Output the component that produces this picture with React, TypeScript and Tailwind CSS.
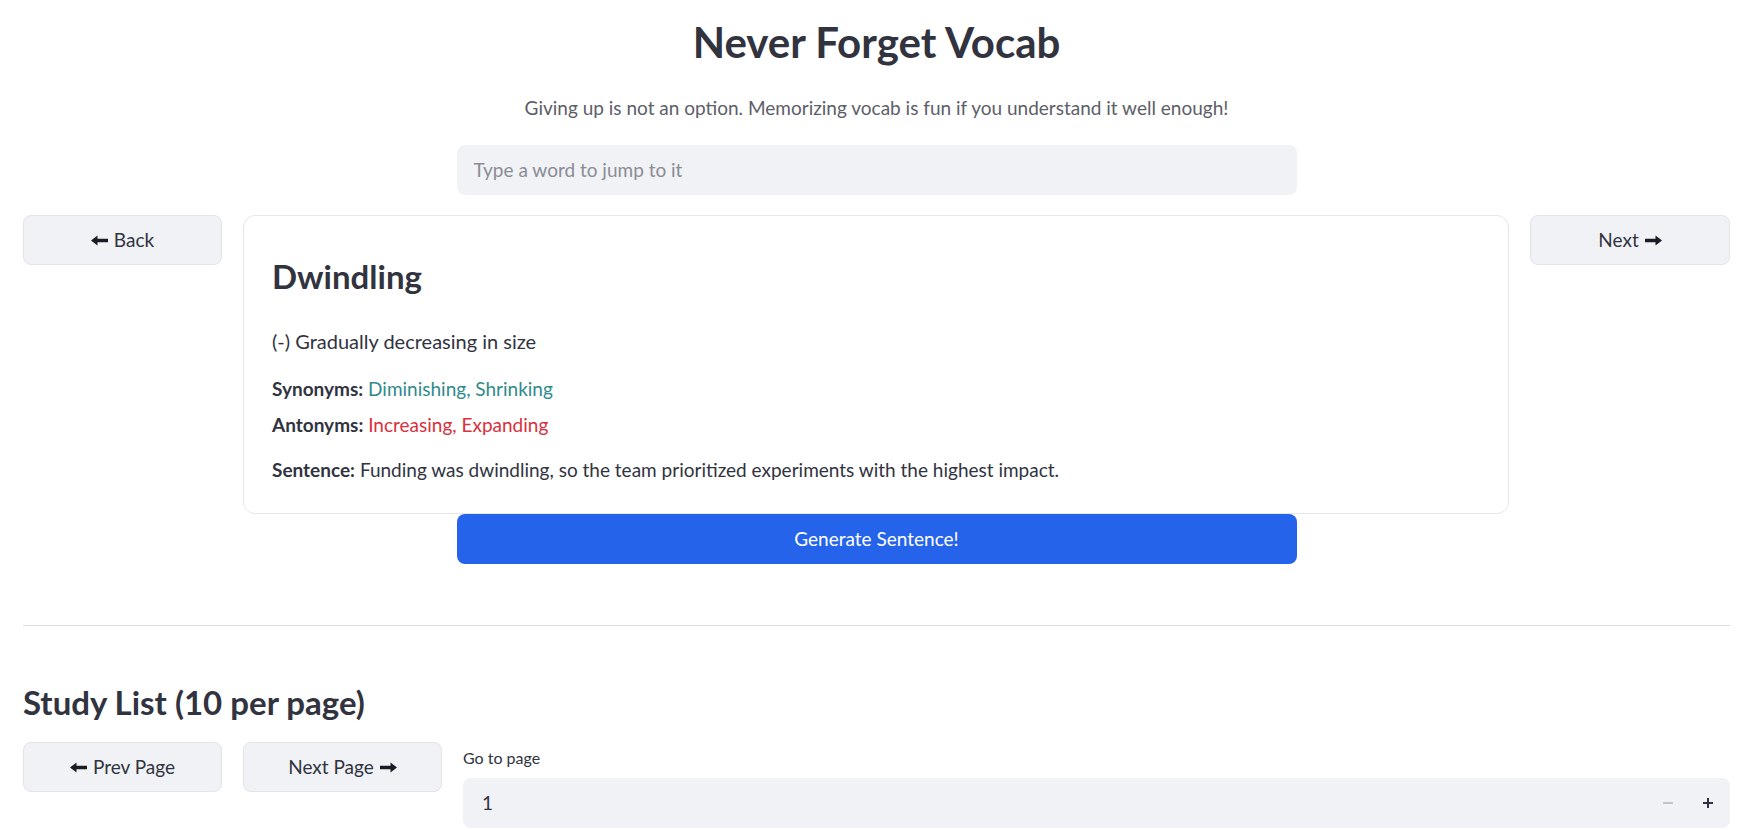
import React from "react";

const font = { fontFamily: "Lato, 'Noto Sans', sans-serif" };

const LeftArrow = () => (
    <svg width="17" height="11" viewBox="0 0 17 11" className="inline-block">
        <path d="M0 5.5 L6.5 0.5 L6.5 3.8 L17 3.8 L17 7.2 L6.5 7.2 L6.5 10.5 Z" fill="#1b1d26" />
    </svg>
);

const RightArrow = () => (
    <svg width="17" height="11" viewBox="0 0 17 11" className="inline-block">
        <path d="M17 5.5 L10.5 0.5 L10.5 3.8 L0 3.8 L0 7.2 L10.5 7.2 L10.5 10.5 Z" fill="#1b1d26" />
    </svg>
);

const GrayButton: React.FC<{ children: React.ReactNode }> = ({ children }) => (
    <button className="h-[50px] w-full rounded-lg border border-[#e2e4e8] bg-[#f0f2f5] text-[19px] text-[#31333f] flex items-center justify-center gap-[6px]">
        {children}
    </button>
);

export default function App() {
    return (
        <div style={font} className="min-h-screen bg-white pl-[23px] pr-[20px] pt-[16px] text-[#31333f]">
            <h1 className="text-center text-[42px] font-bold leading-[53px]">Never Forget Vocab</h1>
            <p className="mt-[27px] text-center text-[19px] leading-[24px] text-[#5c5e68]">
                Giving up is not an option. Memorizing vocab is fun if you understand it well enough!
            </p>
            <div className="mx-auto mt-[25px] flex h-[50px] w-[840px] items-center rounded-lg bg-[#f0f2f6] pl-[17px] text-[19px] text-[#8a8c94]">
                Type a word to jump to it
            </div>

            <div className="mt-[20px] grid grid-cols-[199px_1fr_200px] items-start gap-[21px]">
                <GrayButton>
                    <LeftArrow /> Back
                </GrayButton>
                <div className="rounded-xl border border-[#e6e7ea] px-[28px] pt-[42px] pb-[31px]">
                    <h3 className="text-[33px] font-bold leading-[36px]">Dwindling</h3>
                    <p className="mt-[34px] text-[20px] leading-[27px]">(-) Gradually decreasing in size</p>
                    <p className="mt-[22px] text-[19px] leading-[24px]">
                        <b>Synonyms:</b> <span className="text-[#2f8a8c]">Diminishing, Shrinking</span>
                    </p>
                    <p className="mt-[12px] text-[19px] leading-[24px]">
                        <b>Antonyms:</b> <span className="text-[#d9303c]">Increasing, Expanding</span>
                    </p>
                    <p className="mt-[21px] text-[19px] leading-[24px]">
                        <b>Sentence:</b> Funding was dwindling, so the team prioritized experiments with the highest impact.
                    </p>
                </div>
                <GrayButton>
                    Next <RightArrow />
                </GrayButton>
            </div>

            <button className="mx-auto block h-[50px] w-[840px] rounded-lg bg-[#2563eb] text-[19px] text-white">
                Generate Sentence!
            </button>

            <hr className="mt-[61px] border-0 border-t border-[#dcdde0]" />

            <h2 className="mt-[58px] text-[33px] font-bold leading-[36px]">Study List (10 per page)</h2>

            <div className="mt-[22px] grid grid-cols-[199px_199px_1fr] items-start gap-[21px]">
                <GrayButton>
                    <LeftArrow /> Prev Page
                </GrayButton>
                <GrayButton>
                    Next Page <RightArrow />
                </GrayButton>
                <div className="pt-[6px]">
                    <div className="text-[16px] leading-[20px]">Go to page</div>
                    <div className="mt-[10px] flex h-[50px] items-center rounded-lg bg-[#f0f2f6] pl-[19px] pr-[16px] text-[19px]">
                        <span className="flex-1">1</span>
                        <svg width="12" height="12" viewBox="0 0 12 12" className="mr-[28px]">
                            <path d="M1 6 H11" stroke="#b4b6bc" strokeWidth="1.6" />
                        </svg>
                        <svg width="12" height="12" viewBox="0 0 12 12">
                            <path d="M1 6 H11 M6 1 V11" stroke="#31333f" strokeWidth="2" />
                        </svg>
                    </div>
                </div>
            </div>
        </div>
    );
}
